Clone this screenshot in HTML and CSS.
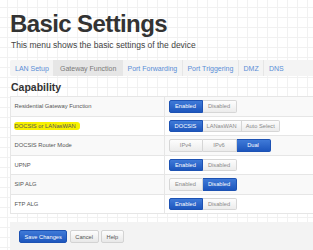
FILE: index.html
```html
<!DOCTYPE html>
<html lang="en">
<head>
    <meta charset="UTF-8">
    <meta name="viewport" content="width=device-width, initial-scale=1.0">
    <title>Basic Settings</title>
    <link rel="stylesheet" href="styles.css">
</head>
<body>

<div class="page">
    <h1>Basic Settings</h1>
    <p class="subtitle">This menu shows the basic settings of the device</p>

    <ul class="tabs">
        <li><a href="#">LAN Setup</a></li>
        <li class="active"><a href="#">Gateway Function</a></li>
        <li><a href="#">Port Forwarding</a></li>
        <li><a href="#">Port Triggering</a></li>
        <li><a href="#">DMZ</a></li>
        <li><a href="#">DNS</a></li>
    </ul>

    <h2>Capability</h2>
    <table class="settings">
        <tbody>
            <tr>
                <td class="label">Residential Gateway Function</td>
                <td>
                    <div class="btn-group">
                        <button class="on">Enabled</button><button>Disabled</button>
                    </div>
                </td>
            </tr>
            <tr>
                <td class="label"><span class="marker">DOCSIS or LANasWAN</span></td>
                <td>
                    <div class="btn-group">
                        <button class="on">DOCSIS</button><button>LANasWAN</button><button>Auto Select</button>
                    </div>
                </td>
            </tr>
            <tr>
                <td class="label">DOCSIS Router Mode</td>
                <td>
                    <div class="btn-group">
                        <button>IPv4</button><button>IPv6</button><button class="on">Dual</button>
                    </div>
                </td>
            </tr>
            <tr>
                <td class="label">UPNP</td>
                <td>
                    <div class="btn-group">
                        <button class="on">Enabled</button><button>Disabled</button>
                    </div>
                </td>
            </tr>
            <tr>
                <td class="label">SIP ALG</td>
                <td>
                    <div class="btn-group">
                        <button>Enabled</button><button class="on">Disabled</button>
                    </div>
                </td>
            </tr>
            <tr>
                <td class="label">FTP ALG</td>
                <td>
                    <div class="btn-group">
                        <button class="on">Enabled</button><button>Disabled</button>
                    </div>
                </td>
            </tr>
        </tbody>
    </table>

    <div class="form-actions">
        <button class="btn btn-primary">Save Changes</button>
        <button class="btn">Cancel</button>
        <button class="btn">Help</button>
    </div>
</div>

</body>
</html>
```

FILE: styles.css
```css
html, body {
    margin: 0;
    padding: 0;
    height: 100%;
    overflow: hidden;
}
body {
    font-family: "Liberation Sans", Arial, sans-serif;
    color: #333;
    background-color: #fff;
    background-image:
        linear-gradient(to right, #f1f1f1 1px, transparent 1px),
        linear-gradient(to bottom, #f1f1f1 1px, transparent 1px);
    background-size: 10px 10px;
    background-position: 7px 7px;
}
.page {
    padding: 12px 0 0 10px;
    width: 420px;
}
h1 {
    margin: 0;
    font-size: 24px;
    line-height: 24px;
    font-weight: bold;
    letter-spacing: -0.6px;
    color: #333;
}
.subtitle {
    margin: 4px 0 0 1px;
    font-size: 8.5px;
    line-height: 10px;
    color: #444;
}

/* tab strip */
.tabs {
    display: flex;
    margin: 10px 0 0;
    padding: 0;
    height: 16px;
    background-color: #f4f4f4;
    border-radius: 2px;
    list-style: none;
}
.tabs li {
    display: flex;
    align-items: center;
    padding: 0 4.6px;
    border-left: 1px solid #e6e6e6;
}
.tabs li:first-child {
    border-left: 0;
    padding-left: 5px;
}
.tabs li.active {
    padding: 0 5.5px;
    background-color: #e6e6e6;
}
.tabs a {
    font-size: 7px;
    color: #5a8ed6;
    text-decoration: none;
}
.tabs li.active a {
    color: #7a7a7a;
}

h2 {
    margin: 5px 0 3px 1px;
    font-size: 10.5px;
    line-height: 12px;
    font-weight: bold;
    color: #333;
}

/* settings table */
.settings {
    width: 100%;
    border-collapse: collapse;
}
.settings td {
    height: 18.5px;
    padding: 0 4px;
    font-size: 5.8px;
    line-height: 8px;
    border-top: 1px solid #e6e6e6;
    border-bottom: 1px solid #e6e6e6;
    vertical-align: middle;
}
.settings tr:nth-child(odd) td {
    background-color: #f9f9f9;
}
.settings tr:nth-child(even) td {
    background-color: #fff;
}
.settings td.label {
    width: 145px;
    border-left: 1px solid #e6e6e6;
    border-right: 1px solid #e6e6e6;
    padding-left: 3.5px;
    color: #555;
}
.marker {
    background-color: #f7f000;
    padding: 1px 4px 1px 1px;
    margin-left: -1px;
    border-radius: 3px;
}

/* toggle groups */
.btn-group {
    display: flex;
}
.btn-group button {
    min-width: 34px;
    height: 12.5px;
    padding: 0 4px;
    margin: 0;
    font-family: "Liberation Sans", Arial, sans-serif;
    font-size: 5.7px;
    color: #8a8a8a;
    background: linear-gradient(#fdfdfd, #ececec);
    border: 1px solid #d6d6d6;
    border-left-width: 0;
}
.btn-group button:first-child {
    border-left-width: 1px;
    border-radius: 2px 0 0 2px;
}
.btn-group button:last-child {
    border-radius: 0 2px 2px 0;
}
.btn-group button.on {
    color: #fff;
    background: linear-gradient(#3f7ad8, #1d56bd);
    border-color: #1d52b3;
}

/* footer bar */
.form-actions {
    display: flex;
    gap: 2.5px;
    margin-top: 8px;
    padding: 8px 9px;
    height: 40px;
    background-color: #f3f3f3;
}
.btn {
    height: 13px;
    padding: 0 4.5px;
    font-family: "Liberation Sans", Arial, sans-serif;
    font-size: 5.7px;
    color: #555;
    background: linear-gradient(#fdfdfd, #e8e8e8);
    border: 1px solid #d3d3d3;
    border-radius: 2px;
}
.btn-primary {
    color: #fff;
    background: linear-gradient(#3f7ad8, #1d56bd);
    border-color: #1d52b3;
}
```
